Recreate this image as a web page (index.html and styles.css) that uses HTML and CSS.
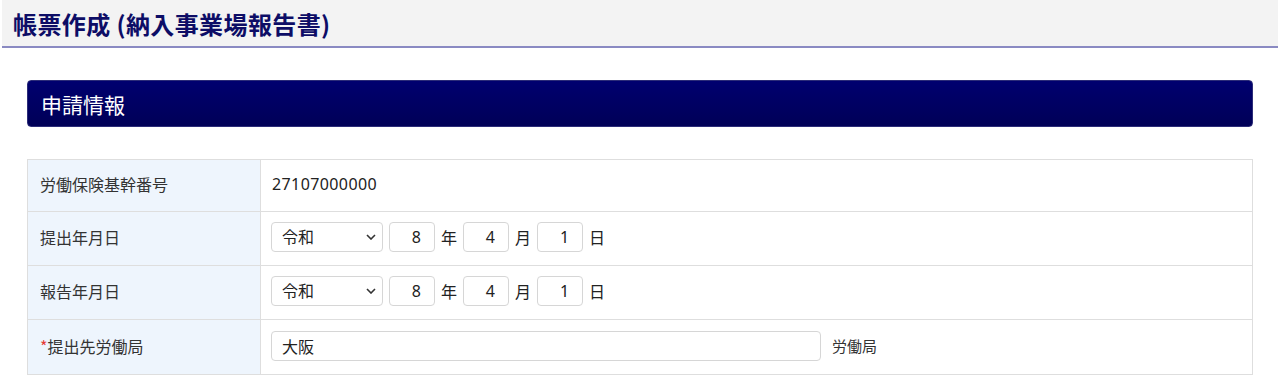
FILE: index.html
```html
<!DOCTYPE html>
<html lang="ja">
<head>
    <meta charset="UTF-8">
    <meta name="viewport" content="width=device-width, initial-scale=1.0">
    <title>帳票作成 (納入事業場報告書)</title>
    <link rel="stylesheet" href="styles.css">
</head>
<body>
    <header class="page-header">
        <h1>帳票作成 (納入事業場報告書)</h1>
    </header>
    <main class="content">
        <div class="panel-title">申請情報</div>
        <table class="form-table">
            <tr class="row-text">
                <th>労働保険基幹番号</th>
                <td>27107000000</td>
            </tr>
            <tr>
                <th>提出年月日</th>
                <td>
                    <div class="date-group">
                        <select class="era">
                            <option>令和</option>
                        </select>
                        <input class="num" type="text" value="8">
                        <span>年</span>
                        <input class="num" type="text" value="4">
                        <span>月</span>
                        <input class="num" type="text" value="1">
                        <span>日</span>
                    </div>
                </td>
            </tr>
            <tr>
                <th>報告年月日</th>
                <td>
                    <div class="date-group">
                        <select class="era">
                            <option>令和</option>
                        </select>
                        <input class="num" type="text" value="8">
                        <span>年</span>
                        <input class="num" type="text" value="4">
                        <span>月</span>
                        <input class="num" type="text" value="1">
                        <span>日</span>
                    </div>
                </td>
            </tr>
            <tr class="row-last">
                <th><span class="required">*</span>提出先労働局</th>
                <td>
                    <div class="date-group">
                        <input class="office" type="text" value="大阪">
                        <span class="suffix">労働局</span>
                    </div>
                </td>
            </tr>
        </table>
    </main>
</body>
</html>
```

FILE: styles.css
```css
body {
    margin: 0;
    font-family: "Noto Sans", "Noto Sans CJK JP", sans-serif;
    color: #222;
    background-color: #ffffff;
}

.page-header {
    margin: 0 2px;
    height: 46px;
    background-color: #f3f3f3;
    border-bottom: 2px solid #8a8ac2;
    display: flex;
    align-items: center;
}

.page-header h1 {
    margin: 0 0 0 11px;
    font-family: "Noto Sans CJK JP", sans-serif;
    font-size: 24px;
    font-weight: 700;
    color: #0d0d66;
    letter-spacing: 0.4px;
}

.content {
    padding: 32px 27px 0 27px;
}

.panel-title {
    height: 45px;
    display: flex;
    align-items: center;
    padding-left: 13px;
    background: linear-gradient(#00006f, #000057);
    border: 1px solid #2c2c78;
    border-radius: 4px;
    color: #ffffff;
    font-family: "Noto Sans CJK JP", sans-serif;
    font-size: 21px;
    font-weight: 400;
}

.form-table {
    width: 100%;
    margin-top: 32px;
    border-collapse: collapse;
    border: 1px solid #dcdcdc;
}

.form-table th,
.form-table td {
    border: 1px solid #dedede;
    height: 50px;
    padding: 0 10px 3px 10px;
    text-align: left;
    vertical-align: middle;
}

.form-table .row-text th,
.form-table .row-text td {
    height: 48px;
}

.form-table .row-text td {
    padding-left: 11px;
    letter-spacing: 0.4px;
}

.form-table .row-last th,
.form-table .row-last td {
    height: 51px;
}

.form-table th {
    width: 210px;
    padding-left: 12px;
    background-color: #eef5fd;
    font-family: "Noto Sans CJK JP", sans-serif;
    font-size: 16px;
    font-weight: 400;
    color: #333;
}

.form-table td {
    font-size: 16px;
}

.required {
    color: #e53935;
}

.date-group {
    display: flex;
    align-items: center;
    gap: 6px;
}

.date-group span {
    font-family: "Noto Sans CJK JP", sans-serif;
    font-size: 16px;
}

select.era,
input.num,
input.office {
    box-sizing: border-box;
    height: 30px;
    border: 1px solid #d6d6d6;
    border-radius: 4px;
    background-color: #ffffff;
    font-family: "Noto Sans", "Noto Sans CJK JP", sans-serif;
    font-size: 16px;
    color: #222;
}

select.era {
    width: 112px;
    padding: 0 8px 0 10px;
    appearance: none;
    background-image: url("data:image/svg+xml,%3Csvg xmlns='http://www.w3.org/2000/svg' width='10' height='6' viewBox='0 0 10 6'%3E%3Cpath d='M1 1l4 4 4-4' fill='none' stroke='%23333' stroke-width='1.6'/%3E%3C/svg%3E");
    background-repeat: no-repeat;
    background-position: right 6px center;
    background-size: 10px 6px;
}

input.num {
    width: 46px;
    padding: 0 13px 0 6px;
    text-align: right;
}

input.office {
    width: 550px;
    padding: 0 10px;
}

.date-group .suffix {
    margin-left: 5px;
    font-size: 15px;
    color: #333;
}
```
